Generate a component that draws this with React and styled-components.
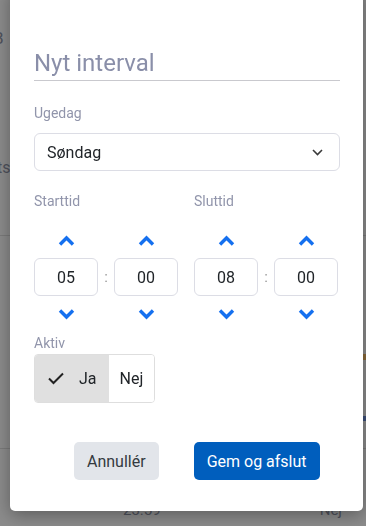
import React from "react";
import styled, { createGlobalStyle } from "styled-components";

const Global = createGlobalStyle`
  html, body { margin: 0; padding: 0; }
  body {
    width: 366px;
    height: 526px;
    overflow: hidden;
    font-family: Roboto, "Liberation Sans", Arial, sans-serif;
    background: #8c8c8c;
  }
`;

/* ---------- dimmed page behind the dialog ---------- */
const Page = styled.div`
  height: 526px;
  background: #8c8c8c;
  display: flex;
  flex-direction: column;
  overflow: hidden;
`;

const PageSection = styled.div`
  height: ${(p) => p.$h}px;
  border-bottom: ${(p) => (p.$line ? "1px solid #7b7b7b" : "none")};
  display: flex;
  flex-direction: column;
  flex-shrink: 0;
  padding-top: ${(p) => p.$pt || 0}px;
  box-sizing: border-box;
`;

const PageText = styled.div`
  font-size: ${(p) => p.$size || 16}px;
  line-height: 20px;
  color: #4f525c;
  margin-left: ${(p) => p.$ml || 0}px;
  margin-top: ${(p) => p.$mt || 0}px;
  white-space: nowrap;
`;

const PageRow = styled.div`
  display: flex;
  align-items: center;
  padding-left: 123px;
  gap: 159px;
  font-size: 15px;
  color: #4f525c;
`;

const Mark = styled.div`
  align-self: flex-end;
  width: 3px;
  height: ${(p) => p.$h}px;
  background: ${(p) => p.$c};
  margin-top: ${(p) => p.$mt}px;
`;

/* ---------- dialog ---------- */
const Dialog = styled.div`
  position: fixed;
  left: 10px;
  top: -14px;
  width: 353px;
  box-sizing: border-box;
  background: #fff;
  border-radius: 5px;
  box-shadow: 0 4px 18px rgba(0, 0, 0, 0.35);
  padding: 61px 23px 31px 24px;
  display: flex;
  flex-direction: column;
`;

const Title = styled.h2`
  margin: 0;
  font-size: 24px;
  line-height: 32px;
  font-weight: 400;
  color: #8a8fa9;
  padding-bottom: 1px;
  border-bottom: 1px solid #c9c9ce;
`;

const Label = styled.div`
  font-size: 14px;
  line-height: 20px;
  color: #9195ab;
  margin-top: ${(p) => p.$mt || 0}px;
`;

const Select = styled.div`
  margin-top: 10px;
  height: 38px;
  box-sizing: border-box;
  border: 1px solid #dcdde5;
  border-radius: 6px;
  display: flex;
  align-items: center;
  justify-content: space-between;
  padding: 0 16px 0 12px;
  font-size: 16px;
  color: #212529;
`;

const TimeGrid = styled.div`
  margin-top: 20px;
  display: grid;
  grid-template-columns: 145px 1fr;
  column-gap: 15px;
`;

const TimeCol = styled.div`
  display: flex;
  flex-direction: column;
`;

const TimeRow = styled.div`
  margin-top: 17px;
  display: flex;
  align-items: center;
`;

const Spinner = styled.div`
  width: 64px;
  display: flex;
  flex-direction: column;
  align-items: center;
  gap: 6px;
`;

const ArrowButton = styled.button`
  width: 64px;
  height: 24px;
  border: 0;
  padding: 0;
  background: transparent;
  display: flex;
  align-items: center;
  justify-content: center;
  cursor: pointer;
`;

const TimeBox = styled.div`
  width: 64px;
  height: 38px;
  box-sizing: border-box;
  border: 1px solid #dcdde5;
  border-radius: 6px;
  display: flex;
  align-items: center;
  justify-content: center;
  font-size: 16px;
  color: #212529;
`;

const Colon = styled.div`
  width: 16px;
  text-align: center;
  font-size: 15px;
  color: #9a9a9a;
`;

const Toggle = styled.div`
  margin-top: 1px;
  align-self: flex-start;
  display: flex;
  height: 49px;
  box-sizing: border-box;
  border: 1px solid #dedede;
  border-radius: 4px;
  overflow: hidden;
`;

const Segment = styled.div`
  display: flex;
  align-items: center;
  gap: 15px;
  padding: ${(p) => (p.$active ? "0 12px 0 13px" : "0 11px")};
  background: ${(p) => (p.$active ? "#e0e0e0" : "#fff")};
  font-size: 16px;
  color: #212529;
`;

const Actions = styled.div`
  margin-top: 39px;
  display: flex;
  padding-left: 40px;
  gap: 35px;
`;

const Button = styled.button`
  height: 38px;
  padding: 0 13px;
  border: 0;
  border-radius: 5px;
  font-family: inherit;
  font-size: 16px;
  font-weight: 400;
  background: ${(p) => (p.$primary ? "#005ebd" : "#e2e5ea")};
  color: ${(p) => (p.$primary ? "#fff" : "#343a40")};
  cursor: pointer;
`;

const Chevron = ({ up }) => (
  <svg width="17" height="11" viewBox="0 0 17 11">
    <polyline
      points={up ? "2,9.5 8.5,3 15,9.5" : "2,1.5 8.5,8 15,1.5"}
      fill="none"
      stroke="#1570ef"
      strokeWidth="3.4"
      strokeLinejoin="miter"
    />
  </svg>
);

const SelectChevron = () => (
  <svg width="11" height="7" viewBox="0 0 11 7">
    <polyline points="1,1 5.5,5.5 10,1" fill="none" stroke="#3a3a3a" strokeWidth="1.6" />
  </svg>
);

const CheckIcon = () => (
  <svg width="16" height="13" viewBox="0 0 16 13">
    <polyline points="1,6.5 5.5,11 15,1.5" fill="none" stroke="#222" strokeWidth="2" />
  </svg>
);

const TimeField = ({ value }) => (
  <Spinner>
    <ArrowButton aria-label="op"><Chevron up /></ArrowButton>
    <TimeBox>{value}</TimeBox>
    <ArrowButton aria-label="ned"><Chevron /></ArrowButton>
  </Spinner>
);

const TimePicker = ({ label, h, m }) => (
  <TimeCol>
    <Label>{label}</Label>
    <TimeRow>
      <TimeField value={h} />
      <Colon>:</Colon>
      <TimeField value={m} />
    </TimeRow>
  </TimeCol>
);

export default function App() {
  return (
    <>
      <Global />
      <Page>
        <PageSection $h={236} $line $pt={28}>
          <PageText $ml={-7} $size={17}>B</PageText>
          <PageText $ml={-3} $mt={110}>ts</PageText>
        </PageSection>
        <PageSection $h={213} $line>
          <Mark $h={6} $c="#8a6a3a" $mt={118} />
          <Mark $h={5} $c="#3d4f7a" $mt={56} />
        </PageSection>
        <PageSection $h={77} $pt={52}>
          <PageRow>
            <span>23.59</span>
            <span>Nej</span>
          </PageRow>
        </PageSection>
      </Page>

      <Dialog role="dialog">
        <Title>Nyt interval</Title>

        <Label $mt={22}>Ugedag</Label>
        <Select>
          <span>Søndag</span>
          <SelectChevron />
        </Select>

        <TimeGrid>
          <TimePicker label="Starttid" h="05" m="00" />
          <TimePicker label="Sluttid" h="08" m="00" />
        </TimeGrid>

        <Label $mt={7}>Aktiv</Label>
        <Toggle>
          <Segment $active>
            <CheckIcon />
            <span>Ja</span>
          </Segment>
          <Segment>Nej</Segment>
        </Toggle>

        <Actions>
          <Button>Annullér</Button>
          <Button $primary>Gem og afslut</Button>
        </Actions>
      </Dialog>
    </>
  );
}
